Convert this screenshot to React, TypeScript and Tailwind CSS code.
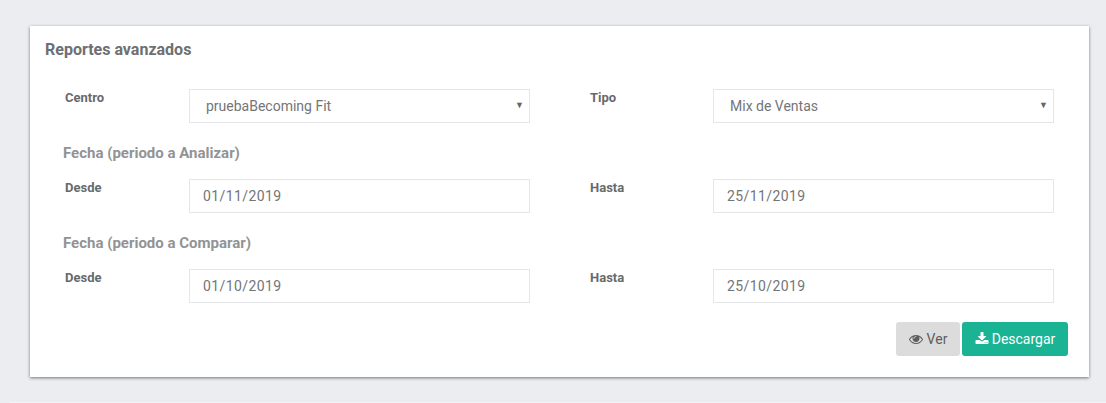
function Field({ label, value, select, labelWidth = "w-[124px]" }: { label: string; value: string; select?: boolean; labelWidth?: string }) {
  return (
    <div className="flex">
      <label className={`${labelWidth} pt-[1px] text-[13px] leading-[16px] font-bold text-[#676a6c]`}>{label}</label>
      <div className={`flex h-[34px] w-[341px] items-center justify-between border border-[#e5e6e7] bg-white text-[14px] text-[#737577] ${select ? "pr-[5px] pl-4" : "pl-[13px] tracking-[0.4px]"}`}>
        <span>{value}</span>
        {select && <span className="text-[9px] text-[#666]">▼</span>}
      </div>
    </div>
  );
}

function Row({ left, right, leftLabel = "Desde", rightLabel = "Hasta", select }: { left: string; right: string; leftLabel?: string; rightLabel?: string; select?: boolean }) {
  return (
    <div className="flex gap-[60px] pl-[35px]">
      <Field label={leftLabel} value={left} select={select} />
      <Field label={rightLabel} value={right} select={select} labelWidth="w-[123px]" />
    </div>
  );
}

function EyeIcon() {
  return (
    <svg viewBox="0 0 1792 1792" fill="currentColor" className="size-[14px]">
      <path d="M1664 960q-152-236-381-353 61 104 61 225 0 185-131.5 316.5t-316.5 131.5-316.5-131.5-131.5-316.5q0-121 61-225-229 117-381 353 133 205 333.5 326.5t434.5 121.5 434.5-121.5 333.5-326.5zm-720-384q0-20-14-34t-34-14q-125 0-214.5 89.5t-89.5 214.5q0 20 14 34t34 14 34-14 14-34q0-86 61-147t147-61q20 0 34-14t14-34zm848 384q0 34-20 69-140 230-376.5 368.5t-499.5 138.5-499.5-139-376.5-368q-20-35-20-69t20-69q140-229 376.5-368t499.5-139 499.5 139 376.5 368q20 35 20 69z" />
    </svg>
  );
}

function DownloadIcon() {
  return (
    <svg viewBox="0 0 1792 1792" fill="currentColor" className="size-[14px]">
      <path d="M1344 1344q0-26-19-45t-45-19-45 19-19 45 19 45 45 19 45-19 19-45zm256 0q0-26-19-45t-45-19-45 19-19 45 19 45 45 19 45-19 19-45zm128-224v320q0 40-28 68t-68 28h-1472q-40 0-68-28t-28-68v-320q0-40 28-68t68-28h465l135 136q58 56 136 56t136-56l136-136h464q40 0 68 28t28 68zm-325-569q17 41-14 70l-448 448q-18 19-45 19t-45-19l-448-448q-31-29-14-70 17-39 59-39h256v-448q0-26 19-45t45-19h256q26 0 45 19t19 45v448h256q42 0 59 39z" />
    </svg>
  );
}

export default function App() {
  return (
    <div className="h-[403px] w-[1106px] bg-[#ebedf1] pt-[26px] font-['Roboto',sans-serif]">
      <div className="ml-[30px] h-[351px] w-[1059px] bg-white shadow-[0_1px_3px_rgba(0,0,0,0.5)]">
        <h2 className="pt-[15px] pl-[15px] text-[16px] leading-[18px] font-bold text-[#6d7072]">Reportes avanzados</h2>

        <div className="mt-[30px]">
          <Row leftLabel="Centro" left="pruebaBecoming Fit" rightLabel="Tipo" right="Mix de Ventas" select />
        </div>

        <h3 className="mt-[21px] mb-[16px] pl-[33px] text-[15px] leading-[19px] font-bold text-[#919395]">Fecha (periodo a Analizar)</h3>
        <Row left="01/11/2019" right="25/11/2019" />

        <h3 className="mt-[21px] mb-[16px] pl-[33px] text-[15px] leading-[19px] font-bold text-[#919395]">Fecha (periodo a Comparar)</h3>
        <Row left="01/10/2019" right="25/10/2019" />

        <div className="mt-[19px] flex justify-end gap-[2px] pr-[21px]">
          <button className="flex h-[34px] w-[64px] items-center justify-center gap-[4px] rounded-[3px] bg-[#dcdcdc] text-[14px] text-[#5e5e5e]">
            <EyeIcon />
            Ver
          </button>
          <button className="flex h-[34px] w-[106px] items-center justify-center gap-[3px] rounded-[3px] bg-[#1ab394] text-[14px] text-white">
            <DownloadIcon />
            Descargar
          </button>
        </div>
      </div>
      <div className="mt-[25px] ml-[10px] h-px bg-[#f3f4f6]" />
    </div>
  );
}
